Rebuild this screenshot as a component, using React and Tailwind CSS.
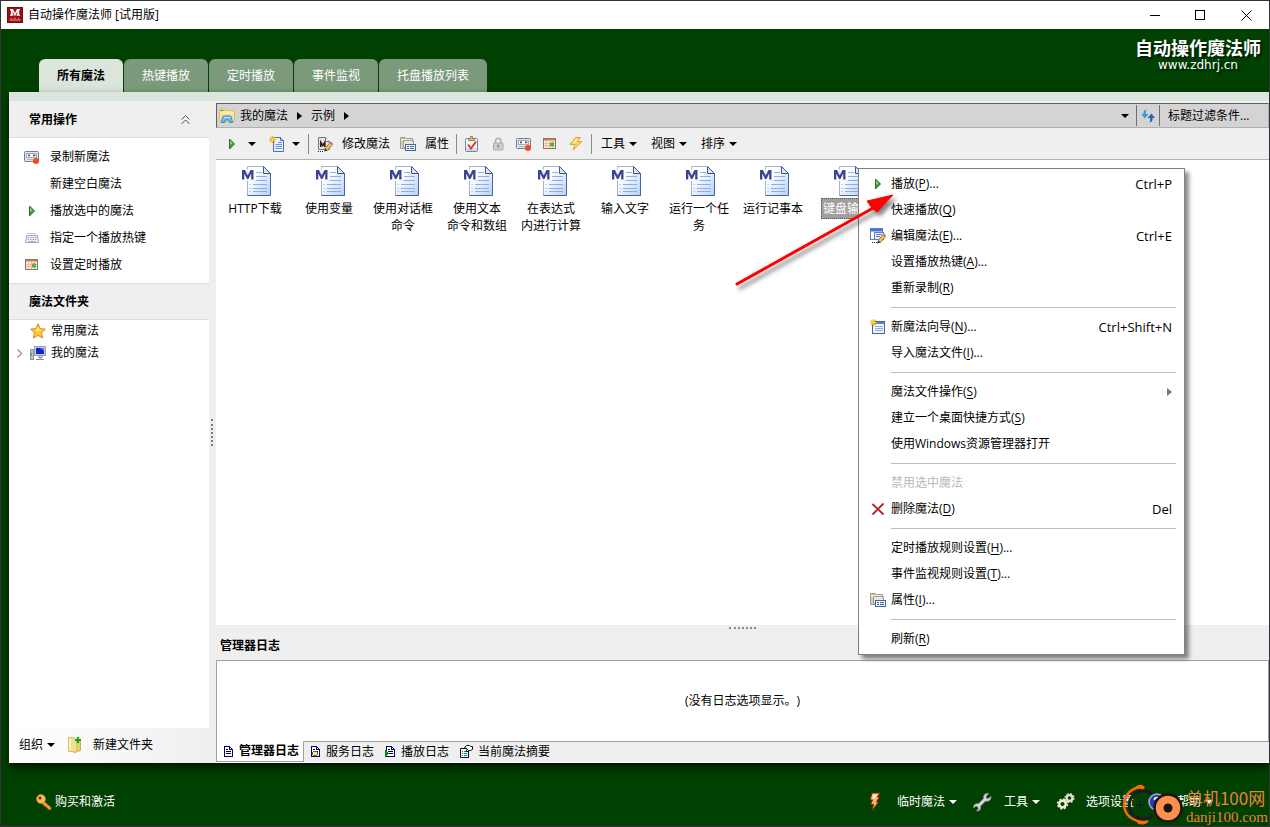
import { useState } from 'react';

const TABS = ['所有魔法', '热键播放', '定时播放', '事件监视', '托盘播放列表'];

const FILES = [
    ['HTTP下载'],
    ['使用变量'],
    ['使用对话框', '命令'],
    ['使用文本', '命令和数组'],
    ['在表达式', '内进行计算'],
    ['输入文字'],
    ['运行一个任', '务'],
    ['运行记事本'],
    ['键盘输入'],
];

/* ---------- Icons ---------- */

function Caret({ className = '' }) {
    return (
        <svg width="8" height="4" viewBox="0 0 8 4" className={`shrink-0 ${className}`}>
            <path d="M0 0h8L4 4z" fill="currentColor" />
        </svg>
    );
}

function RightCaret() {
    return (
        <svg width="5" height="8" viewBox="0 0 5 8" className="shrink-0">
            <path d="M0 0v8l5-4z" fill="currentColor" />
        </svg>
    );
}

function AppIcon() {
    return (
        <svg width="16" height="16" viewBox="0 0 16 16">
            <rect width="16" height="16" fill="#9c1014" />
            <rect x="0.5" y="0.5" width="15" height="15" fill="none" stroke="#7a0a0e" />
            <path d="M3 2h3l2 4 2-4h3v1.4h-.9v4h.9v1.4H9.6V7.4h.6V4.6L8.400 8.800h-.8L5.800 4.600v2.800h.6v1.400H3V7.400h.9v-4H3z" fill="#fff" />
            <path d="M2.500 13h11M4.500 12v-1M8 12v-1.500M11.500 12v-1" stroke="#e8a0a0" />
        </svg>
    );
}

function PlayIcon() {
    return (
        <svg width="16" height="16" viewBox="0 0 16 16">
            <path d="M5.500 3v10L10.500 8z" fill="#3f9a3c" stroke="#2a7029" strokeWidth="1" />
            <path d="M6 4.500l2.500 3L6 9z" fill="#8fd08a" />
        </svg>
    );
}

function RecorderIcon() {
    return (
        <svg width="16" height="16" viewBox="0 0 16 16">
            <rect x="0.500" y="2.500" width="14" height="10" rx="1" fill="#dfe6f0" stroke="#6d7f99" />
            <rect x="2.500" y="4.500" width="10" height="4" fill="#fff" stroke="#a4aab4" />
            <path d="M4 6.500h2M5 5v2.500M9 6.500h2.500M10 5v2.500" stroke="#555" />
            <path d="M3 10.500h7" stroke="#aeb7c4" />
            <circle cx="12" cy="12" r="3" fill="#f04a1c" />
        </svg>
    );
}

function KeyboardIcon() {
    return (
        <svg width="16" height="16" viewBox="0 0 16 16">
            <path d="M3 3.500h9" stroke="#b8c4da" />
            <path d="M2.500 5.500h11l1 7H1.500z" fill="#eef3fb" stroke="#9aa9c4" />
            <path d="M3.500 7.500h9M3.500 9.500h9" stroke="#97a6c2" strokeDasharray="1.500 1" />
            <path d="M4.500 11.500h7" stroke="#9fb0cc" />
        </svg>
    );
}

function CalendarIcon() {
    return (
        <svg width="16" height="16" viewBox="0 0 16 16">
            <rect x="1.500" y="2.500" width="12" height="10" fill="#fdebd6" stroke="#84786c" />
            <rect x="2" y="3" width="11" height="1.500" fill="#d07a50" />
            <path d="M2 7.500h11M2 9.500h11M4.500 5v7M7.500 5v7M10.500 5v7" stroke="#f2bc98" />
            <rect x="8" y="6.500" width="4" height="4" fill="#4fb24a" />
        </svg>
    );
}

function Sparkle() {
    return (
        <g stroke="#e8b90c" strokeWidth="1.200">
            <path d="M3.500 0v7M0 3.500h7M1 1l5 5M6 1L1 6" />
            <circle cx="3.500" cy="3.500" r="1" fill="#fff3a0" stroke="none" />
        </g>
    );
}

function NewPageIcon() {
    return (
        <svg width="16" height="16" viewBox="0 0 16 16">
            <path d="M4.500 1.500h7l3 3v11h-10z" fill="#e8f1fc" stroke="#4d6fa3" />
            <path d="M11.500 1.500v3h3" fill="#bcd3f0" stroke="#4d6fa3" />
            <path d="M9 6.500h4M6.500 8.500h6.500M6.500 10.500h6.500M6.500 12.500h6.500" stroke="#6f93c6" />
            <Sparkle />
        </svg>
    );
}

function NewWindowIcon() {
    return (
        <svg width="16" height="16" viewBox="0 0 16 16">
            <rect x="2.500" y="2.500" width="12" height="12" fill="#f2f6fc" stroke="#4a6391" />
            <rect x="3" y="3" width="11" height="2" fill="#5d86c8" />
            <path d="M5 7.500h8M5 9.500h8M5 11.500h8" stroke="#8fabd4" />
            <Sparkle />
        </svg>
    );
}

function PencilShape() {
    return (
        <g>
            <path d="M8 12.500l5-6 2.500 2-5 6z" fill="#f0c060" stroke="#8a6428" strokeWidth="0.800" />
            <path d="M12.500 7l1.300-1.500 2.200 1.800-1 1.400z" fill="#d8705c" />
            <path d="M8 12.500l-.8 3 3.200-1z" fill="#3a3228" />
        </g>
    );
}

function EditIcon() {
    return (
        <svg width="16" height="16" viewBox="0 0 16 16">
            <path d="M1.500 1.500h7l4 4v8h-11z" fill="#e4e4e4" stroke="#777" />
            <path d="M8.500 1.500v4h4" fill="#fff" stroke="#777" />
            <path d="M3.800 11V6.500L5.800 9.500l2-3V11" fill="none" stroke="#222" strokeWidth="1.600" />
            <PencilShape />
            <path d="M1 15.500h6" stroke="#222" strokeDasharray="1 1" />
        </svg>
    );
}

function EditWindowIcon() {
    return (
        <svg width="16" height="16" viewBox="0 0 16 16">
            <rect x="0.500" y="0.500" width="12" height="11" fill="#fff" stroke="#5a7fc0" />
            <rect x="1" y="1" width="11" height="2.500" fill="#3f74d4" />
            <rect x="4.500" y="4.500" width="9" height="7" fill="#edf3fd" stroke="#5a7fc0" />
            <path d="M6 6.500h6M6 8.500h4" stroke="#5a7fc0" />
            <PencilShape />
            <path d="M2 14.500h5" stroke="#222" strokeDasharray="1 1" />
        </svg>
    );
}

function PropertiesIcon() {
    return (
        <svg width="16" height="16" viewBox="0 0 16 16">
            <path d="M.5 1.500h5l1 1h6v10H.5z" fill="#ecebd8" stroke="#9a9e94" />
            <path d="M1.500 2.500h4" stroke="#e8b64a" />
            <path d="M3.500 4.500h10v7h-10z" fill="#e6e9e2" stroke="#9a9e94" />
            <path d="M2 5v7" stroke="#b4b8a8" />
            <rect x="5.500" y="8.500" width="10" height="6" fill="#f2f7fe" stroke="#4d6488" />
            <path d="M7 10.500h2M7 12.500h2M10 10.500h4M10 12.500h4" stroke="#39629e" />
        </svg>
    );
}

function ClipboardIcon() {
    return (
        <svg width="16" height="16" viewBox="0 0 16 16">
            <rect x="1.500" y="2.500" width="12" height="13" rx="1" fill="#f4f8fe" stroke="#6c86b4" />
            <path d="M2 12h11v3H2z" fill="#c9dbf3" />
            <path d="M4.500 4.500v-2h2v-2h2v2h2v2z" fill="#d8bc84" stroke="#9a7f48" />
            <path d="M4 8.500l3 4 5-7" fill="none" stroke="#e23c1c" strokeWidth="2" />
        </svg>
    );
}

function LockIcon() {
    return (
        <svg width="16" height="16" viewBox="0 0 16 16">
            <path d="M5.500 7V5a2.700 2.700 0 0 1 5.400 0v2" fill="none" stroke="#b0b0b0" strokeWidth="1.600" />
            <rect x="3.500" y="7" width="9.500" height="7" rx="1" fill="#cecece" stroke="#a8a8a8" />
            <path d="M8.200 8.500v3.500M7 10h2.500" stroke="#888" />
        </svg>
    );
}

function BoltIcon() {
    return (
        <svg width="16" height="16" viewBox="0 0 16 16">
            <path d="M7.500 1.500h5L9.500 5.500h4.500L5 14l2-5.500H2z" fill="#ffd255" stroke="#d9a93c" />
            <path d="M8 3h2.500L7.500 7H5z" fill="#fff0a8" />
        </svg>
    );
}

function FireBoltIcon() {
    return (
        <svg width="16" height="20" viewBox="0 0 16 20">
            <path d="M5 1h8l-2.500 4h2L9.500 10h2L5 19l1.500-6.500H3.500L5.500 8H3z" fill="#f8b45c" stroke="#7a2210" />
            <path d="M6 2.500h4L8 6.500H5.500z" fill="#fff4dc" />
        </svg>
    );
}

function FolderIcon() {
    return (
        <svg width="16" height="16" viewBox="0 0 16 16">
            <path d="M.5 2.500l1-1.500h4l1 1.500h9v11H.5z" fill="#f8e498" stroke="#d8bf68" />
            <path d="M1 5h14" stroke="#fff4c4" />
            <path d="M1.500 2.500h3" stroke="#3fae5c" />
            <path d="M2.500 14.500l1-5q.3-1.500 1.500-1.500h6q1.200 0 1.500 1.500l1 5h-3L10 12H6l-.5 2.500z" fill="#6ec1ee" stroke="#3a86bd" />
            <path d="M5 9.500h6" stroke="#c8eafc" />
        </svg>
    );
}

function NewFolderIcon() {
    return (
        <svg width="16" height="18" viewBox="0 0 16 18">
            <path d="M6.500 3.500h7v11l-7 2z" fill="#e9cf70" stroke="#cbb058" />
            <path d="M1.500 1.500h5l3 2v13l-3-1h-5z" fill="#f3df90" stroke="#d8c070" />
            <path d="M3 3v11" stroke="#fff8cc" strokeWidth="1.500" />
            <path d="M11 1v6M8 4h6" stroke="#14a41c" strokeWidth="2.200" />
        </svg>
    );
}

function StarIcon() {
    return (
        <svg width="16" height="16" viewBox="0 0 16 16">
            <path d="M8 .8l2.200 4.800 5.200.6-3.900 3.600 1.100 5.200L8 12.400 3.400 15l1.100-5.200L.6 6.200l5.200-.6z" fill="#ffc637" stroke="#cf7d1c" strokeWidth="0.900" />
            <path d="M8 3.500l1 3 3 .5-4 1-3.500-1L7 6.500z" fill="#fff0a0" />
        </svg>
    );
}

function ComputerIcon() {
    return (
        <svg width="16" height="16" viewBox="0 0 16 16">
            <rect x="0.500" y="4.500" width="3" height="10" fill="#b9c0c8" stroke="#8f969e" />
            <path d="M1.500 8v3" stroke="#29b838" />
            <rect x="4.500" y="1.500" width="11" height="9" fill="#c8ccd4" stroke="#9ba1ac" />
            <rect x="6" y="3" width="8" height="6" fill="#1024cc" />
            <path d="M10 3h4v3z" fill="#5d7cf0" />
            <path d="M9 11v2h3v-2M6 14.500h8" stroke="#8b919c" fill="#c8ccd4" />
        </svg>
    );
}

function KeyIcon() {
    return (
        <svg width="16" height="16" viewBox="0 0 16 16">
            <path d="M7 6.500l8 7V15.500h-3v-1.500h-1.500v-1.500H9L5.500 9z" fill="#f2a43c" stroke="#b86a18" strokeWidth="0.800" />
            <circle cx="5" cy="5" r="4.500" fill="#f9bb58" stroke="#c07820" strokeWidth="0.800" />
            <circle cx="4" cy="4" r="1.500" fill="#4a3a10" />
        </svg>
    );
}

function WrenchIcon() {
    return (
        <svg width="20" height="20" viewBox="0 0 20 20">
            <path d="M12.500 2.500c1.500-1.300 3-1.400 4.500-1l-2.800 2.800.3 2 2 .2L19 4c.3 2-.3 3.500-1.500 4.500-1.300 1-2.600 1-4 .7L8.600 14c.5 1.800 0 3.200-1 4.200-.9.800-2 1-3.200.8l1.800-2-.5-2.200-2-.5-2.200 1.900c-.2-1.500.2-2.800 1.200-3.700 1-.9 2.200-1.100 3.600-.8l5.200-5c-.3-1.600 0-3 1-4.200z" fill="#d4d7da" stroke="#75797c" strokeWidth="0.800" />
        </svg>
    );
}

function GearsIcon() {
    return (
        <svg width="20" height="20" viewBox="0 0 20 20">
            <circle cx="13.500" cy="6" r="4.200" fill="none" stroke="#d8d0c0" strokeWidth="1.800" strokeDasharray="1.900 1.400" />
            <circle cx="13.500" cy="6" r="2.900" fill="none" stroke="#e6dfd0" strokeWidth="2.200" />
            <circle cx="6.500" cy="12" r="4.800" fill="none" stroke="#e0d8c8" strokeWidth="1.800" strokeDasharray="2.200 1.570" />
            <circle cx="6.500" cy="12" r="3.300" fill="none" stroke="#f2ecde" strokeWidth="2.400" />
        </svg>
    );
}

function HelpIcon() {
    return (
        <svg width="18" height="18" viewBox="0 0 18 18">
            <circle cx="9" cy="9" r="8" fill="#2c3cb4" stroke="#a8b0dc" strokeWidth="1.500" />
            <path d="M6.500 7q0-2.500 2.500-2.500T11.500 7q0 1.500-2.500 2.500v1M9 12v2" fill="none" stroke="#fff" strokeWidth="1.600" />
        </svg>
    );
}

function RefreshIcon() {
    return (
        <svg width="16" height="16" viewBox="0 0 16 16">
            <path d="M6.500 1.500Q3 2 3.500 6H1l4 4.500L8.500 6H6Q5.500 3.500 6.500 1.500z" fill="#3f9ad8" />
            <path d="M9.500 14.500Q13 14 12.500 10H15l-3.500-4.500L7.500 10H10q.8 2.500-.5 4.500z" fill="#2a62b4" />
        </svg>
    );
}

function DeleteIcon() {
    return (
        <svg width="16" height="16" viewBox="0 0 16 16">
            <path d="M2.500 3l11 10.500M13.500 2.500l-11 11" stroke="#b4202c" strokeWidth="1.800" />
        </svg>
    );
}

function MacroFileIcon() {
    return (
        <svg width="32" height="32" viewBox="0 0 32 32">
            <defs>
                <linearGradient id="page" x1="0" y1="0" x2="1" y2="1">
                    <stop offset="0.300" stopColor="#ffffff" />
                    <stop offset="1" stopColor="#b4cffb" />
                </linearGradient>
            </defs>
            <path d="M8.500 1.500h16l7 7v22h-23z" fill="url(#page)" stroke="#a3b5d3" />
            <path d="M31.500 8.500v22h-23" fill="none" stroke="#4a6494" />
            <path d="M24.500 1.500v7h7z" fill="#d7e5fa" stroke="#3e5685" />
            <path d="M17 7.500h6M17 11.500h11M14 15.500h14M14 19.500h14M14 23.500h14M14 26.500h14" stroke="#8fadde" />
            <path d="M10.500 15.500h1M10.500 19.500h1M10.500 23.500h1M10.500 26.500h1" stroke="#8fadde" />
            <path d="M2 4h15v12H2z" fill="#fff" fillOpacity="0.700" />
            <path d="M3 5h3l2.700 5.500L11.500 5h3v9.500h-2.300V8.500l-2.700 5.500H8L5.300 8.500v6H3z" fill="#3c4490" />
        </svg>
    );
}

function LogPageIcon({ mark }) {
    return (
        <svg width="11" height="11" viewBox="0 0 11 11" shapeRendering="crispEdges">
            <path d="M1.500.5h5l3 3v7h-8z" fill="#fff" stroke="#000080" />
            <path d="M6.500.5v3h3" fill="none" stroke="#000080" />
            <path d="M3 3.500h2M3 5.500h5M3 7.500h5" stroke="#000" />
            {mark === 'gear' && <circle cx="5" cy="7.500" r="2.500" fill="#f6e4b8" stroke="#8a5a10" />}
            {mark === 'play' && <path d="M0 4v7l4-3.500z" fill="#0a8a1a" />}
        </svg>
    );
}

function SummaryIcon() {
    return (
        <svg width="13" height="13" viewBox="0 0 13 13">
            <path d="M.5 3.500h8v9h-8z" fill="#e8fbfb" stroke="#111" />
            <path d="M2 6.500h1M4 6.500h3M2 8.500h1M4 8.500h3M2 10.500h1M4 10.500h3" stroke="#0a8a8a" />
            <path d="M4.500 2.500l2-2h3l1 1h2v3l-2 1h-2l-1.500 1.500-1-1 1.500-2z" fill="#fff" stroke="#111" />
        </svg>
    );
}

/* ---------- Window frame ---------- */

function TitleBar() {
    return (
        <header className="h-7 shrink-0 bg-white flex items-center pl-[6px]">
            <AppIcon />
            <h1 className="ml-[5px] flex-1 font-normal">自动操作魔法师 [试用版]</h1>
            <button type="button" aria-label="最小化" className="w-[45px] h-full flex items-center justify-center">
                <svg width="11" height="11" viewBox="0 0 11 11"><path d="M0 5.500h10" stroke="#000" /></svg>
            </button>
            <button type="button" aria-label="最大化" className="w-[45px] h-full flex items-center justify-center">
                <svg width="11" height="11" viewBox="0 0 11 11"><rect x="0.500" y="0.500" width="9" height="9" fill="none" stroke="#000" /></svg>
            </button>
            <button type="button" aria-label="关闭" className="w-[46px] h-full flex items-center justify-center">
                <svg width="11" height="11" viewBox="0 0 11 11"><path d="M.5.5l10 10M10.500.5l-10 10" stroke="#000" /></svg>
            </button>
        </header>
    );
}

function TopTabs() {
    const [active, setActive] = useState(TABS[0]);
    return (
        <div className="h-[63px] shrink-0 flex justify-between pl-[38px] pr-2">
            <nav className="flex items-end gap-px">
                {TABS.map((tab) => (
                    <button key={tab} type="button" onClick={() => setActive(tab)}
                        className={`h-[33px] px-[18px] rounded-t-md ${tab === active ? 'bg-[#dce5dc] font-bold' : 'bg-[#7a9a7b] text-white'}`}>
                        {tab}
                    </button>
                ))}
            </nav>
            <div className="pt-2 text-center text-white [text-shadow:2px_2px_2px_rgba(0,0,0,0.6)]">
                <p className="text-[18px] leading-[22px] font-bold">自动操作魔法师</p>
                <p className="text-[12px] leading-[12px] font-['DejaVu_Sans',sans-serif]">www.zdhrj.cn</p>
            </div>
        </div>
    );
}

/* ---------- Left column ---------- */

function Task({ icon, children }) {
    return (
        <li>
            <button type="button" className="h-[27px] w-full pl-[15px] flex items-center gap-[10px]">
                <span className="w-4">{icon}</span>
                {children}
            </button>
        </li>
    );
}

function Sidebar() {
    return (
        <aside className="w-[200px] shrink-0 flex flex-col">
            <div className="h-[37px] pt-[2px] pl-5 pr-[19px] flex items-center justify-between border-b border-[#dcdcdc]">
                <h2 className="font-bold">常用操作</h2>
                <button type="button" aria-label="折叠">
                    <svg width="9" height="10" viewBox="0 0 9 10" fill="none" stroke="#555">
                        <path d="M.5 4.500l4-4 4 4M.5 9l4-4 4 4" />
                    </svg>
                </button>
            </div>
            <ul className="bg-white py-[5px]">
                <Task icon={<RecorderIcon />}>录制新魔法</Task>
                <Task>新建空白魔法</Task>
                <Task icon={<PlayIcon />}>播放选中的魔法</Task>
                <Task icon={<KeyboardIcon />}>指定一个播放热键</Task>
                <Task icon={<CalendarIcon />}>设置定时播放</Task>
            </ul>
            <h2 className="h-[37px] pl-5 flex items-center font-bold border-y border-[#dcdcdc]">魔法文件夹</h2>
            <ul className="flex-1 bg-white">
                <li className="h-[22px] pl-[21px] flex items-center gap-[5px]">
                    <StarIcon />常用魔法
                </li>
                <li className="h-[22px] pl-[6px] flex items-center gap-[5px]">
                    <svg width="10" height="10" viewBox="0 0 10 10" fill="none" stroke="#a0a0a0" strokeWidth="1.500">
                        <path d="M2.500 1.500l4 4-4 4" />
                    </svg>
                    <ComputerIcon />我的魔法
                </li>
            </ul>
            <div className="h-[35px] pb-[2px] pl-[10px] flex items-center bg-gradient-to-r from-white to-[#efefef]">
                <button type="button" className="flex items-center gap-1">组织<Caret /></button>
                <button type="button" className="ml-3 flex items-center gap-[10px]"><NewFolderIcon />新建文件夹</button>
            </div>
        </aside>
    );
}

/* ---------- Right column ---------- */

function AddressBar() {
    return (
        <div className="mt-[2px] h-[25px] shrink-0 flex items-center bg-[#d4d4d4] border border-t-[#5f5f5f] border-l-[#5f5f5f] border-b-[#b0b0b0] border-r-[#b0b0b0]">
            <div className="flex-1 pl-[2px] pr-[7px] flex items-center">
                <FolderIcon />
                <button type="button" className="ml-[5px] mr-[9px]">我的魔法</button>
                <RightCaret />
                <button type="button" className="mx-[9px]">示例</button>
                <RightCaret />
                <Caret className="ml-auto" />
            </div>
            <button type="button" aria-label="刷新" className="h-[21px] w-6 flex items-center justify-center border-x border-[#707070]">
                <RefreshIcon />
            </button>
            <input type="text" aria-label="标题过滤条件" placeholder="标题过滤条件..."
                className="w-[108px] h-full pl-2 bg-transparent outline-none placeholder:text-black" />
        </div>
    );
}

function Separator({ className = '' }) {
    return <span className={`w-px h-5 bg-[#8c8c8c] ${className}`} />;
}

function IconButton({ label, className = '', children }) {
    return <button type="button" aria-label={label} className={className}>{children}</button>;
}

function Toolbar() {
    return (
        <div className="h-8 shrink-0 flex items-center pl-2 border-b border-[#b0b0b0]">
            <IconButton label="播放"><PlayIcon /></IconButton>
            <IconButton label="播放选项" className="ml-2"><Caret /></IconButton>
            <IconButton label="新建" className="ml-[13px]"><NewPageIcon /></IconButton>
            <IconButton label="新建选项" className="ml-[7px]"><Caret /></IconButton>
            <Separator className="mx-2" />
            <button type="button" className="flex items-center gap-[9px]"><EditIcon />修改魔法</button>
            <button type="button" className="ml-[10px] flex items-center gap-[9px]"><PropertiesIcon />属性</button>
            <Separator className="mx-[7px]" />
            <IconButton label="启用"><ClipboardIcon /></IconButton>
            <IconButton label="锁定" className="ml-[10px]"><LockIcon /></IconButton>
            <IconButton label="录制" className="ml-[10px]"><RecorderIcon /></IconButton>
            <IconButton label="定时" className="ml-[10px]"><CalendarIcon /></IconButton>
            <IconButton label="触发" className="ml-[10px]"><BoltIcon /></IconButton>
            <Separator className="ml-[7px] mr-[9px]" />
            <div className="flex gap-[14px]">
                <button type="button" className="flex items-center gap-1">工具<Caret /></button>
                <button type="button" className="flex items-center gap-1">视图<Caret /></button>
                <button type="button" className="flex items-center gap-1">排序<Caret /></button>
            </div>
        </div>
    );
}

function FileList() {
    return (
        <ul className="flex-1 min-h-0 bg-white pl-[2px] pt-[5px] flex flex-wrap content-start">
            {FILES.map((lines, i) => (
                <li key={lines[0]} className="w-[74px] flex flex-col items-center text-center">
                    <MacroFileIcon />
                    <span className={`mt-px leading-[17px] border border-dotted px-px py-px whitespace-nowrap ${i === FILES.length - 1 ? 'bg-[#a0a0a0] border-[#555] text-white' : 'border-transparent'}`}>
                        {lines.map((line) => <span key={line} className="block">{line}</span>)}
                    </span>
                </li>
            ))}
        </ul>
    );
}

function LogPanel() {
    return (
        <section className="shrink-0 flex flex-col">
            <div className="h-[5px] flex justify-center items-center">
                <span className="w-[27px] border-t-2 border-dotted border-[#8a8a8a]" />
            </div>
            <h2 className="h-[30px] pt-[2px] pl-1 flex items-center font-bold">管理器日志</h2>
            <div className="h-[81px] bg-white border border-b-0 border-[#a0a0a0] flex items-center justify-center [text-spacing-trim:space-all]">
                (没有日志选项显示。)
            </div>
            <div className="h-[21px] flex">
                <button type="button" className="px-[6px] pr-1 flex items-center gap-[5px] bg-white border border-t-0 border-[#a0a0a0] font-bold">
                    <LogPageIcon />管理器日志
                </button>
                <div className="flex-1 pb-px pl-[6px] flex items-center gap-[11px] border-t border-[#a0a0a0]">
                    <button type="button" className="flex items-center gap-[5px]"><LogPageIcon mark="gear" />服务日志</button>
                    <button type="button" className="flex items-center gap-[5px]"><LogPageIcon mark="play" />播放日志</button>
                    <button type="button" className="flex items-center gap-[5px]"><SummaryIcon />当前魔法摘要</button>
                </div>
            </div>
            <div className="h-px bg-white" />
        </section>
    );
}

/* ---------- Context menu ---------- */

function MenuItem({ icon, label, accel, more, shortcut, disabled, submenu }) {
    return (
        <button type="button" role="menuitem" disabled={disabled}
            className={`h-[26px] w-full pl-[11px] pr-3 flex items-center ${disabled ? 'text-[#b8b8b8]' : ''}`}>
            <span className="w-[21px]">{icon}</span>
            <span>{label}{accel && <>(<u className="underline-offset-2">{accel}</u>)</>}{more && '...'}</span>
            <span className="ml-auto text-[13px]">{shortcut}</span>
            {submenu && <span className="text-[#777]"><RightCaret /></span>}
        </button>
    );
}

function MenuLine() {
    return (
        <div role="separator" className="h-[13px] pl-8 pr-2 flex items-center">
            <span className="w-full h-px bg-[#bdbdbd]" />
        </div>
    );
}

function ContextMenu() {
    return (
        <div role="menu" className="absolute left-[857px] top-[167px] w-[327px] pt-[2px] pb-[2px] bg-white border border-[#808080] shadow-[4px_4px_4px_rgba(0,0,0,0.45)]">
            <MenuItem icon={<PlayIcon />} label="播放" accel="P" more shortcut="Ctrl+P" />
            <MenuItem label="快速播放" accel="Q" />
            <MenuItem icon={<EditWindowIcon />} label="编辑魔法" accel="E" more shortcut="Ctrl+E" />
            <MenuItem label="设置播放热键" accel="A" more />
            <MenuItem label="重新录制" accel="R" />
            <MenuLine />
            <MenuItem icon={<NewWindowIcon />} label="新魔法向导" accel="N" more shortcut="Ctrl+Shift+N" />
            <MenuItem label="导入魔法文件" accel="I" more />
            <MenuLine />
            <MenuItem label="魔法文件操作" accel="S" submenu />
            <MenuItem label="建立一个桌面快捷方式" accel="S" />
            <MenuItem label="使用Windows资源管理器打开" />
            <MenuLine />
            <MenuItem label="禁用选中魔法" disabled />
            <MenuItem icon={<DeleteIcon />} label="删除魔法" accel="D" shortcut="Del" />
            <MenuLine />
            <MenuItem label="定时播放规则设置" accel="H" more />
            <MenuItem label="事件监视规则设置" accel="T" more />
            <MenuItem icon={<PropertiesIcon />} label="属性" accel="I" more />
            <MenuLine />
            <MenuItem label="刷新" accel="R" />
        </div>
    );
}

function PointerArrow() {
    return (
        <svg width="170" height="110" viewBox="0 0 170 110" aria-hidden="true"
            className="absolute left-[729px] top-[187px] pointer-events-none drop-shadow-[3px_4px_2px_rgba(0,0,0,0.5)]">
            <path d="M7 96L145 19" stroke="#f00" strokeWidth="3" strokeLinecap="round" />
            <path d="M163 7L147 24l-5-4-5-7z" fill="#f00" stroke="#f00" strokeLinejoin="round" />
        </svg>
    );
}

/* ---------- Footer ---------- */

function Footer() {
    return (
        <footer className="h-[63px] shrink-0 pt-[14px] pl-[35px] pr-[56px] flex items-center text-white">
            <button type="button" className="flex items-center gap-[3px]"><KeyIcon />购买和激活</button>
            <button type="button" className="ml-auto flex items-center"><FireBoltIcon /><span className="ml-[14px] mr-1">临时魔法</span><Caret /></button>
            <button type="button" className="ml-[15px] flex items-center"><WrenchIcon /><span className="ml-3 mr-1">工具</span><Caret /></button>
            <button type="button" className="ml-4 flex items-center"><GearsIcon /><span className="ml-[10px]">选项设置</span></button>
            <button type="button" className="ml-[14px] flex items-center"><HelpIcon /><span className="ml-[11px] mr-1">帮助</span><Caret /></button>
        </footer>
    );
}

function SiteMark() {
    return (
        <div className="absolute right-px bottom-0 flex items-end gap-[2px] text-[#e8833a] pointer-events-none">
            <svg width="62" height="42" viewBox="0 0 62 42" fill="none">
                <path d="M18 3Q3 6 2 21q1 15 20 17" stroke="#ff6a00" strokeWidth="2.500" />
                <path d="M12 4q6-6 11-1l-2 3q-4-3-9-1zM15 36q5 3 9 0l3 1q-5 6-12 2z" fill="#ff6a00" />
                <path d="M30 10A14 14 0 1 0 31 31" stroke="#1c1c1c" strokeWidth="3" />
                <path d="M18 17v8M14 21h8" stroke="#1c1c1c" strokeWidth="2" />
                <circle cx="46" cy="24" r="13.500" fill="#ff8f4c" stroke="#1c1414" strokeWidth="2.500" />
                <circle cx="46" cy="24" r="4.500" fill="#1c1414" />
            </svg>
            <p>
                <span className="block text-[17px] leading-[20px] font-['Noto_Sans_CJK_SC',sans-serif]">单机100网</span>
                <span className="block text-[15px] leading-[18px] font-['Liberation_Serif',serif]">danji100.com</span>
            </p>
        </div>
    );
}

export default function App() {
    return (
        <div className="relative h-screen overflow-hidden flex flex-col border border-[#33333b] bg-[#004000] text-black text-[12px] leading-[16px] font-['Open_Sans','Noto_Sans_CJK_SC',sans-serif]">
            <TitleBar />
            <TopTabs />
            <main className="flex-1 min-h-0 ml-2 flex flex-col bg-[#efefef] shadow-[0_4px_8px_rgba(0,0,0,0.7)]">
                <div className="h-[9px] shrink-0 bg-[#dce5dc]" />
                <div className="flex-1 min-h-0 flex">
                    <Sidebar />
                    <div className="w-[7px] shrink-0 flex items-center">
                        <span className="ml-[2px] h-[27px] border-l-2 border-dotted border-[#777]" />
                    </div>
                    <div className="flex-1 min-w-0 flex flex-col">
                        <AddressBar />
                        <Toolbar />
                        <FileList />
                        <LogPanel />
                    </div>
                </div>
            </main>
            <Footer />
            <ContextMenu />
            <PointerArrow />
            <SiteMark />
        </div>
    );
}
